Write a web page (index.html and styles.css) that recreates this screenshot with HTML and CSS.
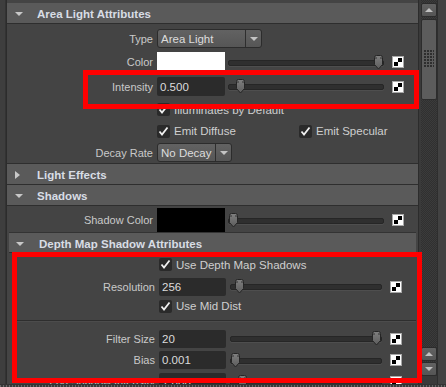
FILE: index.html
```html
<!DOCTYPE html>
<html>
<head>
<meta charset="utf-8">
<link rel="stylesheet" href="styles.css">
</head>
<body>
<div class="screen">
  <div class="app">
    <div class="gutter"></div>
    <div class="main">
      <div class="hdr"><span class="tri-down"></span><span class="htxt">Area Light Attributes</span></div>
      <div class="body area">
        <div class="row h23">
          <div class="lbl">Type</div>
          <div class="drop w105"><span class="dtxt">Area Light</span><span class="darr"></span></div>
        </div>
        <div class="row h24">
          <div class="lbl">Color</div>
          <div class="swatch white"></div>
          <div class="slider" style="--v:1"><div class="track"></div><div class="knob"></div></div>
          <div class="chk"></div>
        </div>
        <div class="row h25">
          <div class="lbl">Intensity</div>
          <div class="field">0.500</div>
          <div class="slider" style="--v:0.05"><div class="track"></div><div class="knob"></div></div>
          <div class="chk"></div>
        </div>
        <div class="row h21">
          <div class="spacer"></div>
          <div class="cb-item"><span class="cb"></span>Illuminates by Default</div>
        </div>
        <div class="row h22">
          <div class="spacer"></div>
          <div class="cb-item first"><span class="cb"></span>Emit Diffuse</div>
          <div class="cb-item"><span class="cb"></span>Emit Specular</div>
        </div>
        <div class="row h21">
          <div class="lbl">Decay Rate</div>
          <div class="drop w75"><span class="dtxt">No Decay</span><span class="darr"></span></div>
        </div>
      </div>
      <div class="hdr"><span class="tri-right"></span><span class="htxt">Light Effects</span></div>
      <div class="hdr"><span class="tri-down"></span><span class="htxt">Shadows</span></div>
      <div class="body shadows">
        <div class="row h24">
          <div class="lbl">Shadow Color</div>
          <div class="swatch black"></div>
          <div class="slider" style="--v:0"><div class="track"></div><div class="knob"></div></div>
          <div class="chk"></div>
        </div>
        <div class="sub">
          <div class="hdr subhdr"><span class="tri-down"></span><span class="htxt">Depth Map Shadow Attributes</span></div>
          <div class="body depth">
            <div class="row h23">
              <div class="spacer"></div>
              <div class="cb-item"><span class="cb"></span>Use Depth Map Shadows</div>
            </div>
            <div class="row h21">
              <div class="lbl">Resolution</div>
              <div class="field">256</div>
              <div class="slider" style="--v:0.03"><div class="track"></div><div class="knob"></div></div>
              <div class="chk"></div>
            </div>
            <div class="row h18">
              <div class="spacer"></div>
              <div class="cb-item"><span class="cb"></span>Use Mid Dist</div>
            </div>
            <div class="sep"></div>
            <div class="row h21">
              <div class="lbl">Filter Size</div>
              <div class="field">20</div>
              <div class="slider" style="--v:1"><div class="track"></div><div class="knob"></div></div>
              <div class="chk"></div>
            </div>
            <div class="row h22">
              <div class="lbl">Bias</div>
              <div class="field">0.001</div>
              <div class="slider" style="--v:0"><div class="track"></div><div class="knob"></div></div>
              <div class="chk"></div>
            </div>
            <div class="row h22">
              <div class="lbl">Fog Shadow Intensity</div>
              <div class="field">1.000</div>
              <div class="slider" style="--v:0.05"><div class="track"></div><div class="knob"></div></div>
              <div class="chk"></div>
            </div>
          </div>
        </div>
      </div>
    </div>
    <div class="sgap"></div>
    <div class="scroll">
      <div class="sbtn up"></div>
      <div class="thumb"><div class="grip"></div></div>
      <div class="strack"></div>
      <div class="sbtn up"></div>
      <div class="sbtn down"></div>
      <div class="sbottom"></div>
    </div>
    <div class="redge"></div>
  </div>
  <div class="footer"></div>
  <div class="mark mark1"></div>
  <div class="mark mark2"></div>
</div>
</body>
</html>
```

FILE: styles.css
```css
html, body {
  margin: 0;
  padding: 0;
  background: #444444;
}
body {
  font-family: "Liberation Sans", Arial, sans-serif;
  font-size: 11px;
  color: #c9c9c9;
}
.screen {
  position: relative;
  width: 446px;
  height: 387px;
  overflow: hidden;
  display: flex;
  flex-direction: column;
}
.app {
  display: flex;
  height: 384px;
  overflow: hidden;
}
.footer {
  height: 3px;
  background: repeating-linear-gradient(90deg, #6a6a6a 0 1px, #3a3a3a 1px 3px);
  border-top: 1px solid #333;
  box-sizing: border-box;
}
.gutter {
  width: 6px;
  background: #3e3e3e;
  border-right: 1px solid #333;
  box-sizing: border-box;
}
.main {
  width: 413px;
  box-sizing: border-box;
  border-left: 1px solid #2c2c2c;
  border-right: 1px solid #2c2c2c;
  padding-top: 3px;
  background: #444444;
  overflow: hidden;
}
.sgap {
  width: 2px;
  background: #3a3a3a;
}
.redge {
  flex: 1;
  background: #424242;
  border-left: 1px solid #2e2e2e;
}

/* headers */
.hdr {
  height: 21px;
  box-sizing: border-box;
  border-bottom: 1px solid #2e2e2e;
  background: #5a5a5a;
  display: flex;
  align-items: center;
  padding-left: 8px;
  padding-top: 2px;
}
.htxt {
  font-weight: bold;
  font-size: 11.5px;
  color: #d8dde5;
  margin-left: 14px;
}
.tri-down {
  width: 0;
  height: 0;
  border-left: 4px solid transparent;
  border-right: 4px solid transparent;
  border-top: 4px solid #c8c8c8;
}
.tri-right {
  width: 0;
  height: 0;
  border-top: 4px solid transparent;
  border-bottom: 4px solid transparent;
  border-left: 5px solid #c8c8c8;
  margin-right: 3px;
}
.subhdr {
  padding-left: 7px;
  height: 20px;
}
.subhdr .htxt {
  margin-left: 15px;
}

/* bodies */
.body.area {
  padding-top: 3px;
  border-bottom: 1px solid #2e2e2e;
}
.body.shadows {
  padding-top: 2px;
}
.sub {
  margin: 0 2px;
  border-top: 1px solid #333;
}

/* rows */
.row {
  display: flex;
  align-items: center;
  padding-right: 14px;
}
.h18 { height: 18px; }
.h21 { height: 21px; }
.h22 { height: 22px; }
.h23 { height: 23px; }
.h24 { height: 24px; }
.h25 { height: 25px; }
.lbl {
  flex: 0 0 150px;
  box-sizing: border-box;
  text-align: right;
  padding-right: 4px;
  white-space: nowrap;
  color: #c9c9c9;
}
.spacer {
  flex: 0 0 150px;
}
.field {
  width: 68px;
  height: 19px;
  box-sizing: border-box;
  background: #2b2b2b;
  border-radius: 2px;
  color: #dcdcdc;
  padding-left: 3px;
  display: flex;
  align-items: center;
  font-size: 11.5px;
}
.depth .field {
  height: 18px;
  width: 67px;
}
.swatch {
  width: 68px;
  height: 20px;
}
.swatch.white { background: #ffffff; }
.swatch.black { background: #000000; height: 24px; }

.slider {
  flex: 1;
  position: relative;
  height: 15px;
  margin: 0 8px 0 3px;
}
.depth .slider {
  margin-left: 4px;
}
.track {
  position: absolute;
  left: 0;
  right: 0;
  top: 5px;
  height: 4px;
  border-radius: 2px;
  background: #2f2f2f;
  border: 1px solid #262626;
  box-shadow: 0 1px 0 #4e4e4e;
}
.knob {
  position: absolute;
  top: 0;
  left: calc(var(--v) * (100% - 11px));
  width: 11px;
  height: 15px;
  background: url("data:image/svg+xml;utf8,<svg xmlns='http://www.w3.org/2000/svg' width='11' height='15'><defs><linearGradient id='g' x1='0' y1='0' x2='0' y2='1'><stop offset='0' stop-color='%23808080'/><stop offset='1' stop-color='%235c5c5c'/></linearGradient></defs><path d='M1.5 2.5 Q1.5 0.5 3.5 0.5 H7.5 Q9.5 0.5 9.5 2.5 V9.5 L5.5 14 L1.5 9.5 Z' fill='url(%23g)' stroke='%23252525'/><path d='M3 2 V4 M8 2 V4' stroke='%23333' stroke-width='1'/></svg>") no-repeat;
}
.chk {
  width: 12px;
  height: 12px;
  box-sizing: border-box;
  border: 1px solid #a8a8a8;
  padding: 1px;
  background: conic-gradient(#000 0 25%, #fff 0 50%, #000 0 75%, #fff 0) content-box, #fff;
}

/* dropdowns */
.drop {
  height: 19px;
  box-sizing: border-box;
  border: 1px solid #2c2c2c;
  border-radius: 3px;
  background: linear-gradient(#626262, #565656);
  display: flex;
  align-items: center;
  color: #dcdcdc;
  font-size: 11.5px;
}
.w105 { width: 105px; }
.w75 { width: 75px; }
.dtxt {
  flex: 1;
  padding-left: 3px;
  white-space: nowrap;
}
.darr {
  width: 15px;
  height: 100%;
  border-left: 1px solid #2e2e2e;
  display: flex;
  align-items: center;
  justify-content: center;
}
.darr::after {
  content: "";
  border-left: 4px solid transparent;
  border-right: 4px solid transparent;
  border-top: 4px solid #c4c4c4;
}

/* checkboxes */
.cb-item {
  display: flex;
  align-items: center;
  white-space: nowrap;
  color: #cfcfcf;
  font-size: 11.5px;
}
.cb-item.first {
  width: 142px;
}
.cb {
  width: 13px;
  height: 13px;
  border-radius: 2px;
  background: #2a2a2a url("data:image/svg+xml;utf8,<svg xmlns='http://www.w3.org/2000/svg' width='13' height='13'><path d='M2.5 6.5 L5 9.5 L10.5 2.5' fill='none' stroke='%23f0f0f0' stroke-width='1.8'/></svg>") no-repeat;
  margin-right: 4px;
  flex: 0 0 13px;
}

/* separator */
.sep {
  height: 13px;
  margin-left: 8px;
  background: linear-gradient(transparent 5px, #2e2e2e 5px 6px, #4c4c4c 6px 7px, transparent 7px);
}

/* scrollbar */
.scroll {
  width: 16px;
  display: flex;
  flex-direction: column;
  padding-top: 3px;
  background: repeating-conic-gradient(#3b3b3b 0 25%, #303030 0 50%) 0 0 / 2px 2px;
}
.sbtn {
  height: 14px;
  box-sizing: border-box;
  background: linear-gradient(#626262, #555);
  border: 1px solid #2c2c2c;
  border-radius: 2px;
  display: flex;
  align-items: center;
  justify-content: center;
}
.sbtn.up::after {
  content: "";
  border-left: 4px solid transparent;
  border-right: 4px solid transparent;
  border-bottom: 4px solid #c0c0c0;
}
.sbtn.down {
  margin-top: 1px;
}
.sbtn.down::after {
  content: "";
  border-left: 4px solid transparent;
  border-right: 4px solid transparent;
  border-top: 4px solid #c0c0c0;
}
.thumb {
  margin-top: 2px;
  height: 81px;
  box-sizing: border-box;
  background: #5c5c5c;
  border: 1px solid #2c2c2c;
  border-radius: 2px;
  display: flex;
  justify-content: center;
  padding-top: 30px;
}
.grip {
  width: 10px;
  height: 18px;
  background: radial-gradient(circle at 1px 1px, #2e2e2e 0.8px, transparent 1px) 0 0 / 3px 3px;
}
.strack {
  flex: 1;
}
.sbottom {
  height: 8px;
  background: #3a3a3a;
}

/* annotation marks */
.mark {
  position: absolute;
  border: 5px solid #ff0000;
  box-sizing: border-box;
}
.mark1 {
  left: 83px;
  top: 70px;
  width: 336px;
  height: 39px;
}
.mark2 {
  left: 12px;
  top: 252px;
  width: 410px;
  height: 131px;
}
```
